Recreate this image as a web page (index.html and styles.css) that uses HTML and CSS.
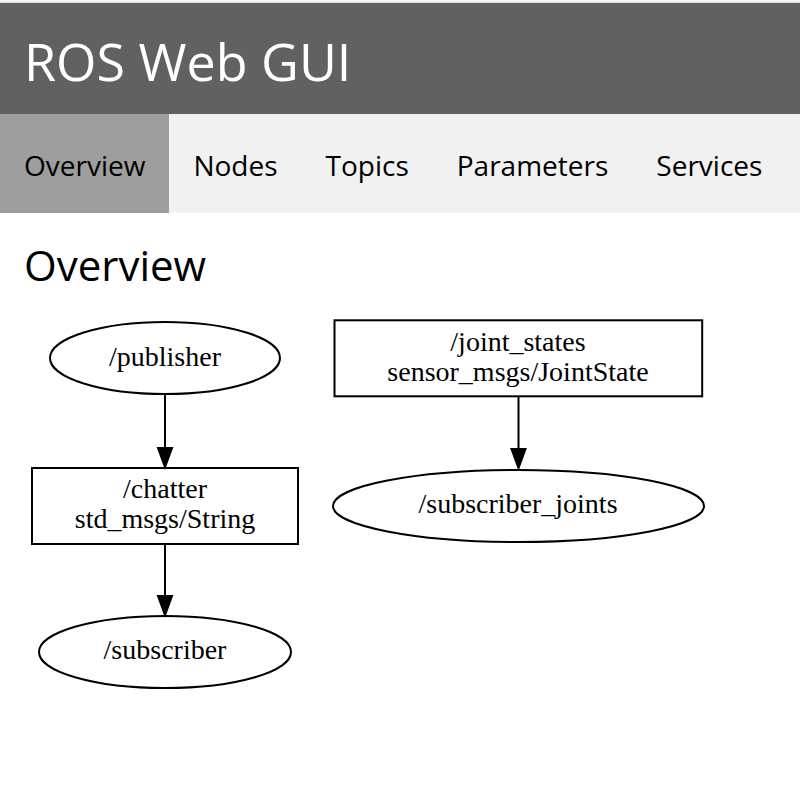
FILE: index.html
```html
<!DOCTYPE html>
<html lang="en">
<head>
<meta charset="utf-8">
<title>ROS Web GUI</title>
<link rel="stylesheet" href="styles.css">
</head>
<body>
<header class="header"><h1 class="brand">ROS Web GUI</h1></header>
<nav class="tabs">
<a class="tab active" href="#overview">Overview</a>
<a class="tab" href="#nodes">Nodes</a>
<a class="tab" href="#topics">Topics</a>
<a class="tab" href="#parameters">Parameters</a>
<a class="tab" href="#services">Services</a>
</nav>
<main class="content" id="overview">
<h2 class="title">Overview</h2>
<svg class="graph" width="688" height="384" viewBox="24 312 688 384" role="img" aria-label="Node graph">
<g class="shape">
<ellipse cx="165" cy="358" rx="115" ry="36"/>
<rect x="32" y="468" width="266" height="76"/>
<ellipse cx="165" cy="652" rx="126" ry="36"/>
<rect x="334.500" y="320.300" width="367.700" height="76"/>
<ellipse cx="518.500" cy="506" rx="185.500" ry="36"/>
<path d="M165 394V448M165 544V596M518.500 396V449"/>
</g>
<path d="M158 448h14l-7 19zM158 596h14l-7 19zM511.500 449h14l-7 19z" class="arrow"/>
<g class="label">
<text x="165" y="366">/publisher</text>
<text x="165" y="498">/chatter</text>
<text x="165" y="528">std_msgs/String</text>
<text x="165" y="659">/subscriber</text>
<text x="518" y="351">/joint_states</text>
<text x="518" y="381">sensor_msgs/JointState</text>
<text x="518" y="513">/subscriber_joints</text>
</g>
</svg>
</main>
</body>
</html>
```
FILE: styles.css
```css
* { box-sizing: border-box; }
body {
  margin: 0;
  border-top: 2px solid #f7f7f7;
  background: #fff;
  color: #000;
  font-family: "Segoe UI", "Open Sans", "Noto Sans", sans-serif;
}
.header {
  padding: 22px 24px 18px;
  border-top: 1px solid #dadada;
  background: #616161;
  color: #fff;
}
.brand {
  margin: 0;
  font-size: 52px;
  line-height: 71px;
  font-weight: 400;
}
.tabs {
  display: flex;
  background: #f1f1f1;
}
.tab {
  padding: 30px 24px 26px;
  color: #000;
  font-size: 28px;
  line-height: 43px;
  text-decoration: none;
}
.active { background: #9e9e9e; }
.content { padding: 20px 24px; }
.title {
  margin: 0 0 16px;
  font-size: 42px;
  line-height: 63px;
  font-weight: 400;
}
.graph { display: block; max-width: 100%; height: auto; }
.shape { fill: none; stroke: #000; stroke-width: 2; }
.arrow { fill: #000; stroke: #000; stroke-width: 2; }
.label {
  font-family: "Times New Roman", "Liberation Serif", serif;
  font-size: 28px;
  text-anchor: middle;
}
```
